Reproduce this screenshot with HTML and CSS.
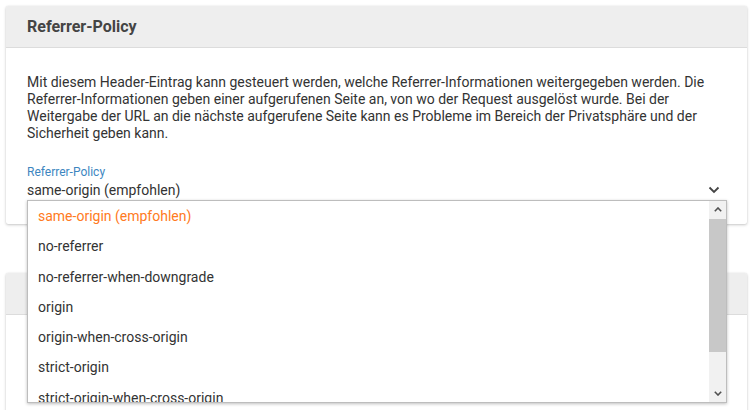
FILE: index.html
```html
<!DOCTYPE html>
<html lang="de">
<head>
<meta charset="utf-8">
<title>Referrer-Policy</title>
<link rel="stylesheet" href="styles.css">
</head>
<body>
<div class="page">
  <section class="card">
    <header class="card-header"><h2 class="card-title">Referrer-Policy</h2></header>
    <div class="card-body">
      <p class="desc">Mit diesem Header-Eintrag kann gesteuert werden, welche Referrer-Informationen weitergegeben werden. Die Referrer-Informationen geben einer aufgerufenen Seite an, von wo der Request ausgelöst wurde. Bei der Weitergabe der URL an die nächste aufgerufene Seite kann es Probleme im Bereich der Privatsphäre und der Sicherheit geben kann.</p>
      <div class="field">
        <label class="field-label">Referrer-Policy</label>
        <div class="select">
          <span class="select-value">same-origin (empfohlen)</span>
          <svg class="chev" width="12" height="8" viewBox="0 0 12 8"><polyline points="1.5,1.5 6,6 10.5,1.5" fill="none" stroke="#444" stroke-width="1.8"/></svg>
        </div>
        <div class="dropdown">
          <ul class="options">
            <li class="opt selected">same-origin (empfohlen)</li>
            <li class="opt">no-referrer</li>
            <li class="opt">no-referrer-when-downgrade</li>
            <li class="opt">origin</li>
            <li class="opt">origin-when-cross-origin</li>
            <li class="opt">strict-origin</li>
            <li class="opt">strict-origin-when-cross-origin</li>
          </ul>
          <div class="scrollbar">
            <div class="sb-btn"><svg width="8" height="5" viewBox="0 0 8 5"><polyline points="0.8,4.2 4,1 7.2,4.2" fill="none" stroke="#505050" stroke-width="1.6"/></svg></div>
            <div class="sb-track"><div class="sb-thumb"></div></div>
            <div class="sb-btn"><svg width="8" height="5" viewBox="0 0 8 5"><polyline points="0.8,0.8 4,4 7.2,0.8" fill="none" stroke="#505050" stroke-width="1.6"/></svg></div>
          </div>
        </div>
      </div>
    </div>
  </section>
  <section class="card card-second">
    <header class="card-header"><h2 class="card-title">&nbsp;</h2></header>
    <div class="card-body tall"></div>
  </section>
</div>
</body>
</html>
```

FILE: styles.css
```css
* { box-sizing: border-box; }
html, body { margin: 0; padding: 0; background: #fff; overflow: hidden; }
body { font-family: Roboto, "Noto Sans", sans-serif; color: #333; font-size: 14px; }
.page { padding: 6px 5px 0 6px; display: flex; flex-direction: column; gap: 49px; }
.card { background: #fff; border-radius: 2px; box-shadow: 0 1px 3px rgba(0,0,0,0.22), 0 0 1px rgba(0,0,0,0.12); }
.card-header { height: 42px; background: #eeeeee; border-bottom: 1px solid #dcdcdc; padding: 0 21px; display: flex; align-items: center; border-radius: 2px 2px 0 0; }
.card-title { margin: 0; font-size: 16px; font-weight: 700; color: #444; }
.card-body { padding: 26px 21px 23px; }
.card-body.tall { height: 200px; }
.desc { margin: 0; line-height: 17px; }
.field { position: relative; margin-top: 23px; }
.field-label { display: block; font-size: 12px; line-height: 14px; color: #3d86bf; }
.select { display: flex; align-items: center; justify-content: space-between; height: 22px; padding-right: 6px; }
.select-value { font-size: 14px; }
.chev { display: block; }
.dropdown { position: absolute; left: 0; top: 35px; width: 700px; height: 203px; background: #fff; border: 1px solid #bdbdbd; box-shadow: 0 1px 3px rgba(0,0,0,0.25); display: flex; z-index: 5; }
.options { list-style: none; margin: 0; padding: 0; flex: 1; overflow: hidden; }
.opt { height: 30.3px; line-height: 30.3px; padding-left: 10px; white-space: nowrap; }
.opt.selected { color: #ff7a22; }
.scrollbar { width: 17px; background: #f1f1f1; display: flex; flex-direction: column; }
.sb-btn { height: 17px; display: flex; align-items: center; justify-content: center; }
.sb-track { flex: 1; }
.sb-thumb { height: 133px; background: #c8c8c8; margin-top: 1px; }
```
